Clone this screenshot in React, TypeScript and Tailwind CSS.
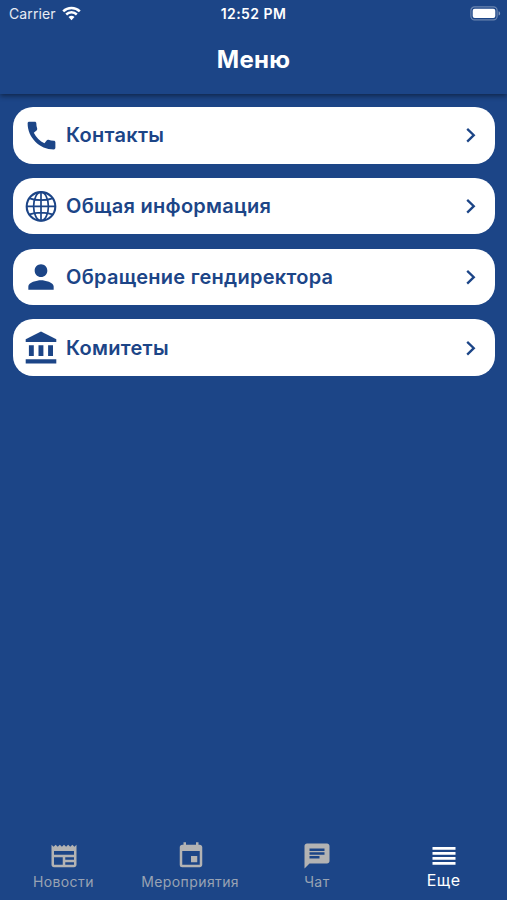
import { type ReactNode } from 'react'
import clsx from 'clsx'
import { MdCall, MdChat, MdEvent, MdNewspaper, MdPerson } from 'react-icons/md'

function GlobeIcon() {
  return (
    <svg width="32" height="32" viewBox="0 0 32 32" fill="none" stroke="currentColor" strokeWidth="1.7">
      <circle cx="16" cy="16.4" r="14.3" strokeWidth="2.1" />
      <ellipse cx="16" cy="16.4" rx="7.4" ry="14.3" />
      <path d="M16 2.1v28.6M1.7 16.4h28.6M4.5 8.4c6.5 2.4 16.5 2.4 23 0M4.5 24.4c6.5-2.4 16.5-2.4 23 0" />
    </svg>
  )
}

function BankIcon() {
  return (
    <svg width="32" height="34" viewBox="0 0 32 34" fill="currentColor">
      <path d="M16 .6 31.3 8.2v2.9H.7V8.2z" />
      <path d="M3.9 14.2h4.9v10.9H3.9zM13.5 14.2h4.9v10.9h-4.9zM23.1 14.2H28v10.9h-4.9zM.7 28.2h30.6v4.4H.7z" />
    </svg>
  )
}

function LinesIcon() {
  return (
    <svg width="24" height="20" viewBox="0 0 24 20" fill="currentColor">
      <path d="M.5 1h23v2.8H.5zM.5 6h23v2.8H.5zM.5 11h23v2.8H.5zM.5 16h23v2.8H.5z" />
    </svg>
  )
}

function WifiIcon() {
  return (
    <svg width="19" height="15" viewBox="0 0 19 15" fill="none" stroke="white" strokeWidth="2.5">
      <path d="M1.2 5.3a11.8 11.8 0 0 1 16.6 0M4.2 8.5a7.6 7.6 0 0 1 10.6 0" />
      <path d="M9.5 14.2 6.5 11.1a4.3 4.3 0 0 1 6 0z" fill="white" stroke="none" />
    </svg>
  )
}

function BatteryIcon() {
  return (
    <svg width="31" height="15" viewBox="0 0 31 15">
      <rect x="0.9" y="0.9" width="26.2" height="13" rx="3.6" fill="none" stroke="white" strokeOpacity="0.35" strokeWidth="1.2" />
      <rect x="2.7" y="2.7" width="22.6" height="9.4" rx="2" fill="white" />
      <path d="M28.6 5.2c2 .7 2 3.7 0 4.4z" fill="white" fillOpacity="0.45" />
    </svg>
  )
}

const items: { label: string; icon: ReactNode }[] = [
  { label: 'Контакты', icon: <MdCall size={37} /> },
  { label: 'Общая информация', icon: <GlobeIcon /> },
  { label: 'Обращение гендиректора', icon: <MdPerson size={38} className="shrink-0" /> },
  { label: 'Комитеты', icon: <BankIcon /> },
]

const tabs: { label: string; icon: ReactNode; active?: boolean }[] = [
  { label: 'Новости', icon: <MdNewspaper size={30} className="ml-px" /> },
  { label: 'Мероприятия', icon: <MdEvent size={30} className="ml-px" /> },
  { label: 'Чат', icon: <MdChat size={30} /> },
  { label: 'Еще', icon: <LinesIcon />, active: true },
]

function MenuItem({ label, icon }: { label: string; icon: ReactNode }) {
  return (
    <button className="flex h-[56.5px] w-full items-center rounded-[20px] bg-white pl-[9.5px] pr-[19px] text-[#1c4587]">
      <span className="flex w-[37px] shrink-0 justify-center">{icon}</span>
      <span className="ml-[6.5px] flex-1 text-left text-[20px] font-semibold tracking-[0.27px]">{label}</span>
      <svg width="10" height="16" viewBox="0 0 10 16" fill="none" stroke="currentColor" strokeWidth="2.3">
        <path d="M1.2 1.8 7.8 8.2l-6.6 6.4" />
      </svg>
    </button>
  )
}

export default function App() {
  return (
    <div className="flex h-[900px] w-full flex-col bg-[#1c4587] font-['Inter','Liberation_Sans',sans-serif] text-white">
      <header className="h-[94px] shrink-0 shadow-[0_2px_5px_rgba(0,0,0,0.45)]">
        <div className="grid h-[26px] grid-cols-3 items-center pl-[9px] pr-[6px] text-[14px]">
          <div className="flex items-center gap-1.5 text-white/90">
            <span className="tracking-[0.1px]">Carrier</span>
            <WifiIcon />
          </div>
          <span className="-ml-[3px] text-center font-semibold tracking-[0.45px]">12:52 PM</span>
          <div className="flex justify-end">
            <BatteryIcon />
          </div>
        </div>
        <h1 className="mt-[18px] text-center text-[24px] font-bold leading-8 tracking-[0.25px]">Меню</h1>
      </header>

      <main className="flex flex-1 flex-col gap-[14.3px] pl-[13px] pr-3 pt-[13px]">
        {items.map((item) => (
          <MenuItem key={item.label} {...item} />
        ))}
      </main>

      <nav className="grid h-[62px] shrink-0 grid-cols-4">
        {tabs.map((tab) => (
          <button
            key={tab.label}
            className={clsx('flex flex-col items-center', tab.active ? 'text-white' : 'text-[#b3b3b3]')}
          >
            <span className="mt-0.5 flex h-[31px] items-center">{tab.icon}</span>
            <span
              className={clsx(
                tab.active
                  ? 'text-[16px] leading-[19px] tracking-[0.6px]'
                  : 'text-[14px] leading-[21px] tracking-[0.4px] text-[#99a3b3]'
              )}
            >
              {tab.label}
            </span>
          </button>
        ))}
      </nav>
    </div>
  )
}
